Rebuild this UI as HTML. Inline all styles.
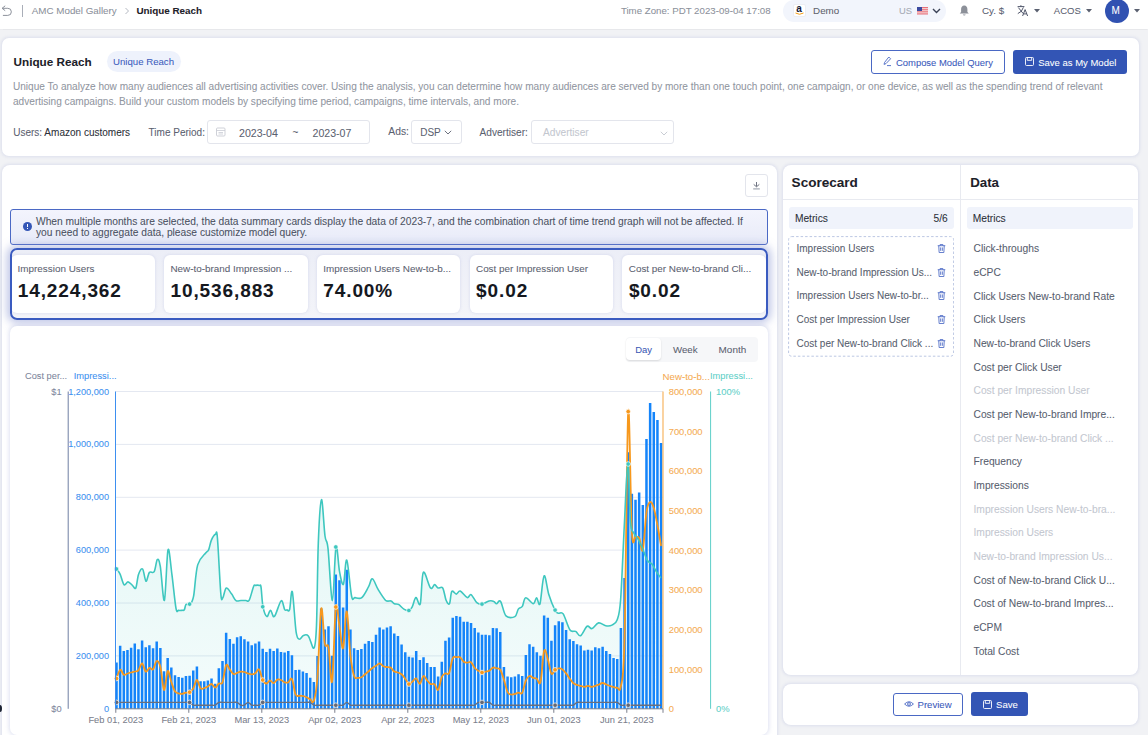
<!DOCTYPE html>
<html><head><meta charset="utf-8">
<style>
*{box-sizing:border-box;margin:0;padding:0}
html,body{width:1148px;height:735px;overflow:hidden}
body{background:#f1f2f5;font-family:"Liberation Sans",sans-serif;color:#1f2329;position:relative;-webkit-text-stroke:0.06px currentColor}
.abs{position:absolute}
.t{position:absolute;white-space:nowrap;line-height:1}
/* header */
#hdr{position:absolute;left:0;top:0;width:1148px;height:29px;background:#fff;box-shadow:0 0.5px 1px rgba(0,0,0,0.04)}
/* cards */
.card{position:absolute;background:#fff;border-radius:8px;box-shadow:0 0 3px 0.5px rgba(175,182,220,0.3)}
.btn{position:absolute;border-radius:3px;font-size:10.3px;line-height:1;white-space:nowrap}
.yl{position:absolute;right:1039px;width:60px;text-align:right;font-size:9.2px;color:#3b8ff0;line-height:14px}
.yl2{position:absolute;left:30px;width:31.7px;text-align:right;font-size:9.3px;color:#7d869c;line-height:14px}
.yr{position:absolute;left:668.7px;margin-top:0.7px;font-size:9.4px;color:#f5ab52;line-height:14px}
.yt{position:absolute;left:716px;margin-top:0.7px;font-size:9.4px;color:#5dcfc8;line-height:14px}
.xl{position:absolute;top:713.7px;width:80px;text-align:center;font-size:9.3px;color:#7b808c;line-height:12px}
.kpi{position:absolute;top:255px;height:58.3px;background:#fff;border-radius:6px;overflow:hidden;box-shadow:0 0 3px rgba(175,182,220,0.45)}
.kl{position:absolute;left:6.5px;top:8.1px;font-size:9.9px;color:#5b6170;white-space:nowrap;line-height:12px}
.kv{position:absolute;left:6.6px;top:24.3px;font-size:19px;letter-spacing:0.9px;font-weight:bold;color:#15181e;white-space:nowrap;line-height:24px}
.sc-row{position:absolute;left:796.5px;margin-top:1px;font-size:10px;color:#575e6e;white-space:nowrap;line-height:14px}
.dt-row{position:absolute;left:973.5px;margin-top:1.8px;font-size:10.25px;color:#575e6e;white-space:nowrap;line-height:14px}
.dt-row.dis{color:#c3c7d0}
.trash{position:absolute;left:937px;width:9px;height:9px}
</style></head>
<body>
<div id="hdr">
  <!-- back icon -->
  <svg class="abs" style="left:0;top:0" width="14" height="18" viewBox="0 0 14 18"><path d="M5.2,5.8 L2.1,8.3 L5.2,10.7 M2.1,8.3 H7.8 A3.55,3.55 0 0 1 7.8,15.4 H2.9" fill="none" stroke="#8c919b" stroke-width="1"/></svg>
  <div class="abs" style="left:22px;top:5px;width:1px;height:11.5px;background:#a9aeb8"></div>
  <div class="t" style="left:31.8px;top:6px;font-size:9.8px;color:#8c919b">AMC Model Gallery</div>
  <svg class="abs" style="left:124px;top:7px" width="6" height="8" viewBox="0 0 6 8"><path d="M1.5,1 L4.5,4 L1.5,7" fill="none" stroke="#b5b9c2" stroke-width="1"/></svg>
  <div class="t" style="left:136.4px;top:5.5px;font-size:9.85px;font-weight:bold;color:#1d2129">Unique Reach</div>

  <div class="t" style="left:620.9px;top:6px;font-size:9.7px;color:#8c919b">Time Zone: PDT 2023-09-04 17:08</div>
  <div class="abs" style="left:783px;top:0px;width:163px;height:22px;border-radius:11px;background:#f2f5fc"></div>
  <div class="abs" style="left:793px;top:4px;width:13px;height:13px;border-radius:2px;background:#fff;border:1px solid #eceef3"></div>
  <div class="t" style="left:796.3px;top:4px;font-size:10px;font-weight:bold;color:#141b38">a</div>
  <svg class="abs" style="left:795px;top:12px" width="9" height="4" viewBox="0 0 9 4"><path d="M0.5,1 Q4.5,3.5 8.5,1" fill="none" stroke="#f39c12" stroke-width="1"/></svg>
  <div class="t" style="left:813.1px;top:6px;font-size:9.8px;color:#5f636d">Demo</div>
  <div class="t" style="left:898.9px;top:6px;font-size:9.4px;color:#a5aab4">US</div>
  <svg class="abs" style="left:917px;top:7px" width="11" height="7.5" viewBox="0 0 11 7.5"><rect width="11" height="7.5" fill="#e8707a"/><rect y="1.1" width="11" height="1.1" fill="#f6d6d8"/><rect y="3.2" width="11" height="1.1" fill="#f6d6d8"/><rect y="5.3" width="11" height="1.1" fill="#f6d6d8"/><rect width="5" height="4" fill="#3b4aa0"/></svg>
  <svg class="abs" style="left:932px;top:8px" width="9" height="6" viewBox="0 0 9 6"><path d="M1,1 L4.5,4.5 L8,1" fill="none" stroke="#3a4256" stroke-width="1.4"/></svg>
  <!-- bell -->
  <svg class="abs" style="left:959px;top:5px" width="10.5" height="11" viewBox="0 0 10.5 11"><path d="M5.25,0.6 C7.4,0.6 8.4,2.4 8.4,4.3 L8.4,7 L9.8,8.6 L0.7,8.6 L2.1,7 L2.1,4.3 C2.1,2.4 3.1,0.6 5.25,0.6 Z" fill="#8c9099"/><path d="M3.8,9.4 A1.5,1.5 0 0 0 6.7,9.4 Z" fill="#8c9099"/></svg>
  <div class="t" style="left:982px;top:5.5px;font-size:9.8px;color:#5a6070">Cy. $</div>
  <!-- translate icon -->
  <svg class="abs" style="left:1017px;top:4px" width="12" height="12" viewBox="0 0 12 12"><path d="M0.6,2.6 H7.4 M3.9,1.2 V2.6 M1.4,3.6 L6.2,9.6 M6.4,3.4 Q5,8 0.8,9.6" fill="none" stroke="#50566a" stroke-width="1"/><path d="M5.6,12 L8.1,5.6 L10.6,12 M6.5,9.9 H9.7" fill="none" stroke="#50566a" stroke-width="1"/></svg>
  <svg class="abs" style="left:1034px;top:9px" width="6" height="4" viewBox="0 0 6 4"><path d="M0,0 H6 L3,3.5 Z" fill="#5a6070"/></svg>
  <div class="t" style="left:1053.8px;top:5.5px;font-size:9.5px;color:#5a6070">ACOS</div>
  <svg class="abs" style="left:1085.5px;top:9px" width="6" height="4" viewBox="0 0 6 4"><path d="M0,0 H6 L3,3.5 Z" fill="#5a6070"/></svg>
  <div class="abs" style="left:1104.5px;top:-1px;width:24px;height:24px;border-radius:50%;background:#3051b1"></div>
  <div class="t" style="left:1111.5px;top:6px;font-size:10px;color:#fff">M</div>
  <svg class="abs" style="left:1134px;top:9px" width="6" height="4" viewBox="0 0 6 4"><path d="M0,0 H6 L3,3.5 Z" fill="#5a6070"/></svg>
</div>

<!-- top card -->
<div class="card" style="left:1.5px;top:37.5px;width:1137.3px;height:118px;border-radius:7px"></div>
<div class="t" style="left:13.6px;top:55.5px;font-size:11.7px;font-weight:bold;color:#1d2129">Unique Reach</div>
<div class="abs" style="left:106.6px;top:51.3px;width:74px;height:21px;border-radius:10.5px;background:#eef2fc"></div>
<div class="t" style="left:113px;top:56.5px;font-size:9.65px;color:#3c5cbd">Unique Reach</div>
<div class="t" style="left:13px;top:82.3px;font-size:10.07px;color:#91969f">Unique To analyze how many audiences all advertising activities cover. Using the analysis, you can determine how many audiences are served by more than one touch point, one campaign, or one device, as well as the spending trend of relevant</div>
<div class="t" style="left:13px;top:96.5px;font-size:10.1px;color:#91969f">advertising campaigns. Build your custom models by specifying time period, campaigns, time intervals, and more.</div>

<div class="btn" style="left:871px;top:50px;width:134px;height:24px;border:1px solid #4a68c4;background:#fff"></div>
<svg class="abs" style="left:883px;top:56px" width="9" height="11" viewBox="0 0 9 11"><path d="M5.8,1 L7.6,2.8 L3,7.6 L1,8.4 L1.6,6.4 Z" fill="none" stroke="#4a68c4" stroke-width="0.9"/><path d="M4,9.6 H8" stroke="#4a68c4" stroke-width="0.9"/></svg>
<div class="t" style="left:896px;top:57.6px;font-size:9.43px;color:#3a59bb">Compose Model Query</div>
<div class="btn" style="left:1012.7px;top:50px;width:114.1px;height:24px;background:#3355b5"></div>
<svg class="abs" style="left:1024.5px;top:57px" width="9" height="9" viewBox="0 0 9 9"><rect x="0.5" y="0.5" width="8" height="8" rx="1" fill="none" stroke="#fff" stroke-width="0.9"/><path d="M2.3,0.8 V3.3 H6.7 V0.8" fill="none" stroke="#fff" stroke-width="0.9"/></svg>
<div class="t" style="left:1038.2px;top:57.6px;font-size:9.5px;color:#fff">Save as My Model</div>

<div class="t" style="left:13.2px;top:128px;font-size:10.03px;color:#5b6170">Users: <span style="color:#2b2f38">Amazon customers</span></div>
<div class="t" style="left:148.6px;top:127.6px;font-size:10px;color:#5b6170">Time Period:</div>
<div class="abs" style="left:207.3px;top:120px;width:163.2px;height:23.5px;border:1px solid #e3e5ec;border-radius:3px;background:#fff"></div>
<svg class="abs" style="left:216px;top:127px" width="9.5" height="9.5" viewBox="0 0 9.5 9.5"><rect x="0.5" y="1" width="8.5" height="8" rx="1" fill="none" stroke="#c9ccd4" stroke-width="0.9"/><path d="M0.5,3.5 H9 M2.5,5.5 H7 M2.5,7 H7" stroke="#c9ccd4" stroke-width="0.8"/></svg>
<div class="t" style="left:239px;top:128px;font-size:10.6px;color:#5b6170">2023-04</div>
<div class="t" style="left:292.5px;top:128px;font-size:10px;color:#5b6170">~</div>
<div class="t" style="left:312.5px;top:128px;font-size:10.6px;color:#5b6170">2023-07</div>
<div class="t" style="left:388.3px;top:127.4px;font-size:10.3px;color:#5b6170">Ads:</div>
<div class="abs" style="left:411px;top:120px;width:50.5px;height:23.5px;border:1px solid #e3e5ec;border-radius:3px;background:#fff"></div>
<div class="t" style="left:420.2px;top:127.6px;font-size:10px;color:#5b6170">DSP</div>
<svg class="abs" style="left:443.5px;top:130px" width="8" height="5" viewBox="0 0 8 5"><path d="M0.8,0.8 L4,4 L7.2,0.8" fill="none" stroke="#5b6170" stroke-width="0.9"/></svg>
<div class="t" style="left:479.6px;top:128px;font-size:10.11px;color:#5b6170">Advertiser:</div>
<div class="abs" style="left:531.3px;top:120px;width:142.4px;height:23.5px;border:1px solid #e3e5ec;border-radius:3px;background:#fff"></div>
<div class="t" style="left:543px;top:128px;font-size:10.17px;color:#c3c7cf">Advertiser</div>
<svg class="abs" style="left:659.5px;top:130.5px" width="8" height="5" viewBox="0 0 8 5"><path d="M0.8,0.8 L4,4 L7.2,0.8" fill="none" stroke="#c3c7cf" stroke-width="0.9"/></svg>

<!-- chart outer card -->
<div class="card" style="left:1.5px;top:164.5px;width:775.3px;height:600px"></div>
<div class="abs" style="left:745.4px;top:174.2px;width:22.3px;height:22.5px;border:1px solid #e3e5ec;border-radius:3px;background:#fff"></div>
<svg class="abs" style="left:751px;top:180px" width="11" height="11" viewBox="0 0 11 11"><path d="M5.5,2 V6.6 M2.7,4.4 L5.5,6.8 L8.3,4.4" fill="none" stroke="#6f7482" stroke-width="1"/><path d="M2.2,8.9 H8.8" fill="none" stroke="#a3a8b3" stroke-width="1.2"/></svg>

<!-- alert -->
<div class="abs" style="left:10.2px;top:209.2px;width:757.5px;height:35.4px;border:1px solid #4b69c5;border-radius:3px;background:linear-gradient(180deg,#f3f4fd 0%,#e8ebf8 100%)"></div>
<div class="abs" style="left:23px;top:222px;width:9.2px;height:9.2px;border-radius:50%;background:#3456b6"></div>
<div class="abs" style="left:27px;top:223.6px;width:1.2px;height:3.3px;background:#fff"></div>
<div class="abs" style="left:27px;top:228px;width:1.2px;height:1.2px;background:#fff"></div>
<div class="t" style="left:36px;top:217px;font-size:10.24px;color:#4b5262">When multiple months are selected, the data summary cards display the data of 2023-7, and the combination chart of time trend graph will not be affected. If</div>
<div class="t" style="left:36px;top:228.3px;font-size:10.24px;color:#4b5262">you need to aggregate data, please customize model query.</div>

<!-- KPI group -->
<div class="abs" style="left:10px;top:248.4px;width:757.8px;height:71.2px;border:2px solid #3a5bc0;border-radius:7px;background:linear-gradient(180deg,#eceef7,#f3f4f9);overflow:hidden;box-shadow:0 0 8px 3px rgba(125,140,205,0.5)">
  <div class="kpi" style="left:-0.9px;top:4.6px;width:143.8px"><div class="kl">Impression Users</div><div class="kv">14,224,362</div></div>
  <div class="kpi" style="left:151.9px;top:4.6px;width:143.8px"><div class="kl">New-to-brand Impression ...</div><div class="kv">10,536,883</div></div>
  <div class="kpi" style="left:304.7px;top:4.6px;width:143.8px"><div class="kl">Impression Users New-to-b...</div><div class="kv">74.00%</div></div>
  <div class="kpi" style="left:457.5px;top:4.6px;width:143.8px"><div class="kl">Cost per Impression User</div><div class="kv">$0.02</div></div>
  <div class="kpi" style="left:610.3px;top:4.6px;width:143.8px"><div class="kl">Cost per New-to-brand Cli...</div><div class="kv">$0.02</div></div>
</div>

<!-- chart inner card -->
<div class="abs" style="left:9.8px;top:326px;width:758px;height:409px;border-radius:7px;background:#fff;box-shadow:0 0 4px 1px rgba(160,170,215,0.35)"></div>
<!-- segmented -->
<div class="abs" style="left:625.6px;top:337px;width:132px;height:24.5px;border-radius:4px;background:#f6f7f9"></div>
<div class="abs" style="left:626px;top:337.5px;width:35px;height:22.8px;border-radius:4px;background:#fff;box-shadow:0 1px 2px rgba(0,0,0,0.12)"></div>
<div class="t" style="left:635.2px;top:344.5px;font-size:9.45px;color:#3b58b5">Day</div>
<div class="t" style="left:673px;top:344.5px;font-size:9.7px;color:#5b6170">Week</div>
<div class="t" style="left:718.6px;top:344.5px;font-size:9.95px;color:#5b6170">Month</div>
<div class="t" style="left:25px;top:371.5px;font-size:9.26px;color:#7d869c">Cost per...</div>
<div class="t" style="left:73.7px;top:371.5px;font-size:9.3px;color:#3b8ff0">Impressi...</div>
<div class="t" style="left:662.6px;top:371.5px;font-size:9.69px;color:#f5ab52">New-to-b...</div>
<div class="t" style="left:710px;top:371.5px;font-size:9.3px;color:#5dcfc8">Impressi...</div>
<svg class="abs" style="left:0;top:0" width="1148" height="735">
<line x1="115.5" y1="391.5" x2="663" y2="391.5" stroke="#e4e8f1" stroke-width="1"/>
<line x1="115.5" y1="444.4" x2="663" y2="444.4" stroke="#e4e8f1" stroke-width="1"/>
<line x1="115.5" y1="497.3" x2="663" y2="497.3" stroke="#e4e8f1" stroke-width="1"/>
<line x1="115.5" y1="550.1" x2="663" y2="550.1" stroke="#e4e8f1" stroke-width="1"/>
<line x1="115.5" y1="603.0" x2="663" y2="603.0" stroke="#e4e8f1" stroke-width="1"/>
<line x1="115.5" y1="655.9" x2="663" y2="655.9" stroke="#e4e8f1" stroke-width="1"/>
<defs><linearGradient id="tg" x1="0" y1="0" x2="0" y2="1"><stop offset="0" stop-color="#45c8c0" stop-opacity="0.16"/><stop offset="1" stop-color="#45c8c0" stop-opacity="0.06"/></linearGradient></defs>
<path d="M116.8,569.0 C117.4,569.9 119.0,571.8 120.2,574.4 C121.4,577.0 122.7,583.4 124.0,584.6 C125.3,585.9 126.6,581.8 128.0,581.9 C129.4,582.0 131.1,584.3 132.4,585.3 C133.7,586.3 134.8,589.8 135.8,588.0 C136.8,586.2 137.4,577.6 138.5,574.4 C139.6,571.2 141.3,567.9 142.6,569.0 C143.8,570.1 144.9,580.6 146.0,581.2 C147.1,581.8 148.0,574.0 149.4,572.4 C150.8,570.8 152.9,573.9 154.2,571.7 C155.5,569.6 156.3,560.4 157.3,559.5 C158.3,558.6 159.1,559.5 160.3,566.3 C161.5,573.1 163.1,603.0 164.4,600.3 C165.7,597.6 166.8,554.2 168.0,549.9 C169.2,545.6 170.6,564.6 171.9,574.4 C173.2,584.1 174.9,602.4 176.0,608.4 C177.1,614.4 177.5,610.0 178.5,610.3 C179.5,610.6 181.0,610.4 182.0,610.3 C183.0,610.2 183.6,610.8 184.3,609.8 C185.0,608.8 185.1,605.3 186.1,604.4 C187.1,603.5 188.9,605.5 190.2,604.1 C191.4,602.7 192.3,602.7 193.6,596.2 C194.8,589.7 195.6,572.1 197.7,564.9 C199.8,557.6 204.1,555.2 205.9,552.7 C207.7,550.2 207.7,552.0 208.6,549.9 C209.5,547.8 210.2,543.0 211.3,540.4 C212.4,537.8 214.4,534.8 215.4,534.3 C216.4,533.8 216.5,527.8 217.4,537.7 C218.3,547.6 219.9,583.5 220.8,593.5 C221.7,603.5 222.0,598.5 222.9,597.6 C223.8,596.7 224.8,588.6 226.3,588.0 C227.8,587.4 230.1,592.0 231.7,594.1 C233.3,596.2 234.4,599.5 236.0,600.6 C237.6,601.7 239.3,600.5 241.0,600.5 C242.7,600.5 244.6,600.5 246.0,600.5 C247.4,600.5 247.9,602.5 249.2,600.2 C250.5,597.9 252.5,589.0 253.6,586.5 C254.7,584.0 254.5,585.6 255.5,585.4 C256.5,585.2 258.6,585.1 259.5,585.4 C260.4,585.7 260.4,583.4 261.0,587.0 C261.6,590.6 262.0,601.9 263.0,606.8 C264.0,611.7 265.6,615.9 266.9,616.5 C268.1,617.1 269.2,610.4 270.5,610.4 C271.8,610.4 272.6,618.1 274.4,616.5 C276.2,614.9 279.4,601.9 281.1,600.8 C282.8,599.6 283.7,608.1 284.7,609.6 C285.7,611.1 286.2,609.8 287.0,609.8 C287.8,609.8 288.7,612.6 289.6,609.6 C290.5,606.6 291.2,588.1 292.3,591.8 C293.4,595.5 294.9,623.9 296.1,631.8 C297.3,639.7 298.2,638.5 299.4,639.1 C300.6,639.7 301.9,635.9 303.4,635.4 C304.9,634.9 306.5,633.8 308.3,635.9 C310.1,638.0 312.6,649.9 314.0,648.1 C315.4,646.3 315.8,642.8 316.5,625.3 C317.2,607.8 317.5,564.0 318.3,543.1 C319.1,522.2 320.4,500.9 321.5,499.7 C322.6,498.5 323.9,527.9 325.0,536.0 C326.1,544.1 326.8,537.6 328.0,548.4 C329.2,559.2 331.1,600.8 332.4,600.6 C333.7,600.4 334.8,551.9 336.0,547.0 C337.2,542.1 338.3,565.2 339.5,571.4 C340.7,577.6 342.2,586.2 343.4,584.3 C344.6,582.4 345.4,558.1 346.8,560.1 C348.2,562.1 350.2,590.0 351.6,596.2 C353.0,602.5 353.3,597.4 355.0,597.6 C356.7,597.8 359.5,599.4 361.8,597.6 C364.1,595.8 366.8,589.8 368.6,586.7 C370.4,583.6 370.8,578.3 372.4,578.8 C374.0,579.2 375.9,585.8 378.1,589.4 C380.3,593.0 383.5,598.4 385.6,600.3 C387.8,602.2 389.5,600.4 391.0,601.0 C392.5,601.6 393.1,603.1 394.4,603.7 C395.6,604.3 396.9,603.5 398.5,604.4 C400.1,605.3 402.2,608.1 403.9,609.1 C405.6,610.1 407.3,610.8 408.7,610.5 C410.1,610.2 410.9,609.2 412.1,607.1 C413.3,605.0 414.5,598.2 415.9,597.6 C417.3,597.0 419.1,607.9 420.3,603.7 C421.5,599.5 421.6,575.0 423.3,572.4 C425.0,569.8 428.6,586.0 430.5,588.0 C432.4,590.0 433.4,584.6 434.6,584.6 C435.9,584.6 436.6,587.4 438.0,588.0 C439.4,588.6 441.3,586.0 442.7,588.0 C444.1,590.0 445.0,597.7 446.1,600.3 C447.2,602.9 448.6,605.2 449.5,603.7 C450.4,602.2 450.7,593.0 451.8,591.4 C452.9,589.8 454.9,594.2 456.3,594.1 C457.7,594.0 458.4,590.4 460.2,591.0 C462.0,591.6 465.4,597.0 467.2,597.6 C469.0,598.2 469.5,593.8 471.1,594.6 C472.7,595.5 475.0,601.1 476.8,602.7 C478.6,604.3 479.9,604.4 481.9,604.1 C483.9,603.8 487.0,601.5 489.0,601.0 C491.0,600.5 492.6,600.9 493.8,601.4 C495.1,601.9 495.4,603.7 496.5,603.7 C497.6,603.7 499.0,599.4 500.6,601.4 C502.2,603.4 503.6,613.4 506.0,615.9 C508.4,618.4 512.9,617.7 514.9,616.6 C516.9,615.5 517.1,610.8 518.3,609.1 C519.5,607.4 521.1,608.3 522.3,606.4 C523.5,604.5 523.9,598.2 525.7,597.8 C527.5,597.3 531.4,603.7 533.2,603.7 C535.0,603.7 535.5,597.8 536.6,597.8 C537.7,597.8 538.8,607.4 540.0,603.7 C541.2,600.0 542.6,577.3 544.1,575.8 C545.6,574.3 547.1,589.1 548.9,594.8 C550.7,600.5 553.4,607.0 555.0,610.1 C556.6,613.2 557.0,612.6 558.4,613.2 C559.8,613.8 561.3,611.1 563.2,613.9 C565.1,616.7 567.9,627.1 570.0,630.0 C572.1,632.9 573.9,630.4 575.7,631.4 C577.5,632.4 578.7,636.6 580.6,635.7 C582.5,634.9 585.2,627.5 587.1,626.3 C589.0,625.1 590.1,629.2 592.0,628.6 C593.9,628.0 596.3,623.4 598.6,622.9 C600.9,622.4 603.5,625.3 605.7,625.7 C607.9,626.1 610.1,626.1 612.0,625.1 C613.9,624.1 615.7,624.2 617.1,620.0 C618.5,615.8 619.4,615.7 620.6,600.0 C621.8,584.3 623.1,548.4 624.3,525.7 C625.5,503.0 626.8,464.6 627.8,464.0 C628.8,463.4 629.5,510.9 630.5,522.4 C631.5,533.9 632.6,530.3 633.8,533.0 C635.0,535.7 636.4,536.2 637.9,538.8 C639.4,541.3 640.9,544.7 642.5,548.3 C644.1,551.9 645.8,557.9 647.4,560.5 C649.0,563.1 650.6,562.2 652.0,564.0 C653.4,565.8 654.5,568.7 656.0,571.0 C657.5,573.3 660.0,576.8 660.8,578.0 L660.8,708.8 L116.8,708.8 Z" fill="url(#tg)"/>
<path d="M115.25,662.5h2.5V708.8h-2.5ZM118.91,645.7h2.5V708.8h-2.5ZM122.56,651.0h2.5V708.8h-2.5ZM126.22,650.0h2.5V708.8h-2.5ZM129.87,647.7h2.5V708.8h-2.5ZM133.53,643.4h2.5V708.8h-2.5ZM137.18,649.2h2.5V708.8h-2.5ZM140.84,640.4h2.5V708.8h-2.5ZM144.49,647.3h2.5V708.8h-2.5ZM148.14,645.3h2.5V708.8h-2.5ZM151.80,648.3h2.5V708.8h-2.5ZM155.45,641.5h2.5V708.8h-2.5ZM159.11,648.0h2.5V708.8h-2.5ZM162.76,671.2h2.5V708.8h-2.5ZM166.42,657.9h2.5V708.8h-2.5ZM170.07,667.5h2.5V708.8h-2.5ZM173.73,675.2h2.5V708.8h-2.5ZM177.38,677.0h2.5V708.8h-2.5ZM181.04,677.7h2.5V708.8h-2.5ZM184.69,675.9h2.5V708.8h-2.5ZM188.35,675.8h2.5V708.8h-2.5ZM192.00,670.4h2.5V708.8h-2.5ZM195.66,666.6h2.5V708.8h-2.5ZM199.31,681.2h2.5V708.8h-2.5ZM202.97,681.2h2.5V708.8h-2.5ZM206.62,680.6h2.5V708.8h-2.5ZM210.28,678.5h2.5V708.8h-2.5ZM213.94,683.8h2.5V708.8h-2.5ZM217.59,668.3h2.5V708.8h-2.5ZM221.25,661.0h2.5V708.8h-2.5ZM224.90,632.8h2.5V708.8h-2.5ZM228.56,638.9h2.5V708.8h-2.5ZM232.21,643.8h2.5V708.8h-2.5ZM235.87,637.3h2.5V708.8h-2.5ZM239.52,636.3h2.5V708.8h-2.5ZM243.18,639.2h2.5V708.8h-2.5ZM246.83,641.5h2.5V708.8h-2.5ZM250.48,645.3h2.5V708.8h-2.5ZM254.14,643.4h2.5V708.8h-2.5ZM257.79,641.5h2.5V708.8h-2.5ZM261.45,648.8h2.5V708.8h-2.5ZM265.11,652.1h2.5V708.8h-2.5ZM268.76,648.8h2.5V708.8h-2.5ZM272.41,651.1h2.5V708.8h-2.5ZM276.07,648.5h2.5V708.8h-2.5ZM279.73,652.1h2.5V708.8h-2.5ZM283.38,652.6h2.5V708.8h-2.5ZM287.03,651.1h2.5V708.8h-2.5ZM290.69,655.2h2.5V708.8h-2.5ZM294.35,670.1h2.5V708.8h-2.5ZM298.00,669.8h2.5V708.8h-2.5ZM301.65,671.4h2.5V708.8h-2.5ZM305.31,673.1h2.5V708.8h-2.5ZM308.97,677.8h2.5V708.8h-2.5ZM312.62,682.0h2.5V708.8h-2.5ZM316.27,656.0h2.5V708.8h-2.5ZM319.93,608.5h2.5V708.8h-2.5ZM323.58,629.4h2.5V708.8h-2.5ZM327.24,626.2h2.5V708.8h-2.5ZM330.89,655.8h2.5V708.8h-2.5ZM334.55,574.4h2.5V708.8h-2.5ZM338.20,580.2h2.5V708.8h-2.5ZM341.86,607.4h2.5V708.8h-2.5ZM345.51,569.8h2.5V708.8h-2.5ZM349.17,629.6h2.5V708.8h-2.5ZM352.82,648.2h2.5V708.8h-2.5ZM356.48,650.0h2.5V708.8h-2.5ZM360.13,649.1h2.5V708.8h-2.5ZM363.79,643.7h2.5V708.8h-2.5ZM367.44,641.0h2.5V708.8h-2.5ZM371.10,642.0h2.5V708.8h-2.5ZM374.75,634.8h2.5V708.8h-2.5ZM378.41,627.6h2.5V708.8h-2.5ZM382.06,629.4h2.5V708.8h-2.5ZM385.72,627.6h2.5V708.8h-2.5ZM389.38,626.3h2.5V708.8h-2.5ZM393.03,633.5h2.5V708.8h-2.5ZM396.69,636.0h2.5V708.8h-2.5ZM400.34,644.5h2.5V708.8h-2.5ZM404.00,652.2h2.5V708.8h-2.5ZM407.65,656.8h2.5V708.8h-2.5ZM411.31,657.6h2.5V708.8h-2.5ZM414.96,650.9h2.5V708.8h-2.5ZM418.62,659.9h2.5V708.8h-2.5ZM422.27,657.2h2.5V708.8h-2.5ZM425.93,662.9h2.5V708.8h-2.5ZM429.58,667.1h2.5V708.8h-2.5ZM433.23,667.1h2.5V708.8h-2.5ZM436.89,676.4h2.5V708.8h-2.5ZM440.54,661.7h2.5V708.8h-2.5ZM444.20,640.7h2.5V708.8h-2.5ZM447.85,637.5h2.5V708.8h-2.5ZM451.51,617.7h2.5V708.8h-2.5ZM455.16,615.9h2.5V708.8h-2.5ZM458.82,616.8h2.5V708.8h-2.5ZM462.47,621.7h2.5V708.8h-2.5ZM466.13,621.7h2.5V708.8h-2.5ZM469.78,623.1h2.5V708.8h-2.5ZM473.44,628.1h2.5V708.8h-2.5ZM477.09,632.6h2.5V708.8h-2.5ZM480.75,634.8h2.5V708.8h-2.5ZM484.40,634.8h2.5V708.8h-2.5ZM488.06,635.3h2.5V708.8h-2.5ZM491.71,628.1h2.5V708.8h-2.5ZM495.37,628.3h2.5V708.8h-2.5ZM499.02,632.0h2.5V708.8h-2.5ZM502.68,667.1h2.5V708.8h-2.5ZM506.33,676.6h2.5V708.8h-2.5ZM509.99,677.3h2.5V708.8h-2.5ZM513.64,676.6h2.5V708.8h-2.5ZM517.30,674.3h2.5V708.8h-2.5ZM520.95,676.0h2.5V708.8h-2.5ZM524.61,655.0h2.5V708.8h-2.5ZM528.26,644.3h2.5V708.8h-2.5ZM531.92,646.8h2.5V708.8h-2.5ZM535.58,652.2h2.5V708.8h-2.5ZM539.23,655.8h2.5V708.8h-2.5ZM542.88,615.5h2.5V708.8h-2.5ZM546.54,617.7h2.5V708.8h-2.5ZM550.19,640.7h2.5V708.8h-2.5ZM553.85,625.2h2.5V708.8h-2.5ZM557.50,621.3h2.5V708.8h-2.5ZM561.16,622.2h2.5V708.8h-2.5ZM564.82,629.9h2.5V708.8h-2.5ZM568.47,639.2h2.5V708.8h-2.5ZM572.12,641.0h2.5V708.8h-2.5ZM575.78,644.3h2.5V708.8h-2.5ZM579.43,645.5h2.5V708.8h-2.5ZM583.09,650.4h2.5V708.8h-2.5ZM586.74,649.7h2.5V708.8h-2.5ZM590.40,650.6h2.5V708.8h-2.5ZM594.05,647.3h2.5V708.8h-2.5ZM597.71,648.2h2.5V708.8h-2.5ZM601.37,646.8h2.5V708.8h-2.5ZM605.02,650.9h2.5V708.8h-2.5ZM608.67,654.0h2.5V708.8h-2.5ZM612.33,658.1h2.5V708.8h-2.5ZM615.98,659.0h2.5V708.8h-2.5ZM619.64,628.1h2.5V708.8h-2.5ZM623.29,578.0h2.5V708.8h-2.5ZM626.95,452.3h2.5V708.8h-2.5ZM630.61,493.8h2.5V708.8h-2.5ZM634.26,499.7h2.5V708.8h-2.5ZM637.91,492.4h2.5V708.8h-2.5ZM641.57,504.9h2.5V708.8h-2.5ZM645.23,439.1h2.5V708.8h-2.5ZM648.88,403.1h2.5V708.8h-2.5ZM652.53,411.9h2.5V708.8h-2.5ZM656.19,420.1h2.5V708.8h-2.5ZM659.85,442.9h2.5V708.8h-2.5Z" fill="#1484fa"/>
<path d="M116.5,702.4 C117.1,702.4 118.9,702.4 120.2,702.4 C121.4,702.4 122.6,702.4 123.8,702.4 C125.0,702.4 126.2,702.4 127.5,702.4 C128.7,702.4 129.9,702.4 131.1,702.4 C132.3,702.4 133.6,702.4 134.8,702.4 C136.0,702.4 137.2,702.4 138.4,702.4 C139.6,702.4 140.9,702.4 142.1,702.4 C143.3,702.4 144.5,702.4 145.7,702.4 C147.0,702.4 148.2,702.4 149.4,702.4 C150.6,702.4 151.8,702.4 153.1,702.4 C154.3,702.4 155.5,702.4 156.7,702.4 C157.9,702.4 159.1,702.4 160.4,702.4 C161.6,702.4 162.8,702.4 164.0,702.4 C165.2,702.4 166.5,702.4 167.7,702.4 C168.9,702.4 170.1,702.4 171.3,702.4 C172.5,702.4 173.8,702.4 175.0,702.4 C176.2,702.4 177.4,702.4 178.6,702.4 C179.9,702.4 181.1,702.4 182.3,702.4 C183.5,702.4 184.7,702.4 185.9,702.4 C187.2,702.4 188.4,701.9 189.6,702.4 C190.8,702.9 192.0,704.7 193.3,705.2 C194.5,705.7 195.7,705.2 196.9,705.2 C198.1,705.2 199.3,705.2 200.6,705.2 C201.8,705.2 203.0,705.2 204.2,705.2 C205.4,705.2 206.7,705.2 207.9,705.2 C209.1,705.2 210.3,705.2 211.5,705.2 C212.7,705.2 214.0,705.7 215.2,705.2 C216.4,704.7 217.6,702.9 218.8,702.4 C220.1,701.9 221.3,702.4 222.5,702.4 C223.7,702.4 224.9,702.4 226.1,702.4 C227.4,702.4 228.6,702.4 229.8,702.4 C231.0,702.4 232.2,702.4 233.5,702.4 C234.7,702.4 235.9,701.9 237.1,702.4 C238.3,702.9 239.6,704.7 240.8,705.2 C242.0,705.7 243.2,705.7 244.4,705.2 C245.6,704.7 246.9,702.4 248.1,702.4 C249.3,702.4 250.5,704.7 251.7,705.2 C253.0,705.7 254.2,705.2 255.4,705.2 C256.6,705.2 257.8,705.7 259.0,705.2 C260.3,704.7 261.5,702.9 262.7,702.4 C263.9,701.9 265.1,702.4 266.4,702.4 C267.6,702.4 268.8,702.4 270.0,702.4 C271.2,702.4 272.4,702.4 273.7,702.4 C274.9,702.4 276.1,702.4 277.3,702.4 C278.5,702.4 279.8,702.4 281.0,702.4 C282.2,702.4 283.4,702.4 284.6,702.4 C285.8,702.4 287.1,702.4 288.3,702.4 C289.5,702.4 290.7,702.4 291.9,702.4 C293.2,702.4 294.4,702.4 295.6,702.4 C296.8,702.4 298.0,702.4 299.2,702.4 C300.5,702.4 301.7,702.4 302.9,702.4 C304.1,702.4 305.3,702.4 306.6,702.4 C307.8,702.4 309.0,701.9 310.2,702.4 C311.4,702.9 312.7,704.7 313.9,705.2 C315.1,705.7 316.3,705.2 317.5,705.2 C318.7,705.2 320.0,705.2 321.2,705.2 C322.4,705.2 323.6,705.2 324.8,705.2 C326.1,705.2 327.3,705.2 328.5,705.2 C329.7,705.2 330.9,705.2 332.1,705.2 C333.4,705.2 334.6,705.2 335.8,705.2 C337.0,705.2 338.2,705.2 339.5,705.2 C340.7,705.2 341.9,705.7 343.1,705.2 C344.3,704.7 345.5,702.4 346.8,702.4 C348.0,702.4 349.2,704.7 350.4,705.2 C351.6,705.7 352.9,705.2 354.1,705.2 C355.3,705.2 356.5,705.2 357.7,705.2 C358.9,705.2 360.2,705.2 361.4,705.2 C362.6,705.2 363.8,705.2 365.0,705.2 C366.3,705.2 367.5,705.2 368.7,705.2 C369.9,705.2 371.1,705.2 372.4,705.2 C373.6,705.2 374.8,705.2 376.0,705.2 C377.2,705.2 378.4,705.2 379.7,705.2 C380.9,705.2 382.1,705.2 383.3,705.2 C384.5,705.2 385.8,705.2 387.0,705.2 C388.2,705.2 389.4,705.2 390.6,705.2 C391.8,705.2 393.1,705.2 394.3,705.2 C395.5,705.2 396.7,705.2 397.9,705.2 C399.2,705.2 400.4,705.2 401.6,705.2 C402.8,705.2 404.0,705.2 405.2,705.2 C406.5,705.2 407.7,705.2 408.9,705.2 C410.1,705.2 411.3,705.2 412.6,705.2 C413.8,705.2 415.0,705.2 416.2,705.2 C417.4,705.2 418.6,705.2 419.9,705.2 C421.1,705.2 422.3,705.2 423.5,705.2 C424.7,705.2 426.0,705.2 427.2,705.2 C428.4,705.2 429.6,705.2 430.8,705.2 C432.0,705.2 433.3,705.2 434.5,705.2 C435.7,705.2 436.9,705.2 438.1,705.2 C439.4,705.2 440.6,705.2 441.8,705.2 C443.0,705.2 444.2,705.2 445.4,705.2 C446.7,705.2 447.9,705.2 449.1,705.2 C450.3,705.2 451.5,705.2 452.8,705.2 C454.0,705.2 455.2,705.2 456.4,705.2 C457.6,705.2 458.9,705.2 460.1,705.2 C461.3,705.2 462.5,705.2 463.7,705.2 C464.9,705.2 466.2,705.2 467.4,705.2 C468.6,705.2 469.8,705.2 471.0,705.2 C472.3,705.2 473.5,705.7 474.7,705.2 C475.9,704.7 477.1,702.9 478.3,702.4 C479.6,701.9 480.8,702.4 482.0,702.4 C483.2,702.4 484.4,702.4 485.7,702.4 C486.9,702.4 488.1,701.9 489.3,702.4 C490.5,702.9 491.7,704.7 493.0,705.2 C494.2,705.7 495.4,705.2 496.6,705.2 C497.8,705.2 499.1,705.2 500.3,705.2 C501.5,705.2 502.7,705.2 503.9,705.2 C505.1,705.2 506.4,705.2 507.6,705.2 C508.8,705.2 510.0,705.2 511.2,705.2 C512.5,705.2 513.7,705.2 514.9,705.2 C516.1,705.2 517.3,705.2 518.5,705.2 C519.8,705.2 521.0,705.2 522.2,705.2 C523.4,705.2 524.6,705.2 525.9,705.2 C527.1,705.2 528.3,705.2 529.5,705.2 C530.7,705.2 532.0,705.2 533.2,705.2 C534.4,705.2 535.6,705.2 536.8,705.2 C538.0,705.2 539.3,705.2 540.5,705.2 C541.7,705.2 542.9,705.2 544.1,705.2 C545.4,705.2 546.6,705.2 547.8,705.2 C549.0,705.2 550.2,705.2 551.4,705.2 C552.7,705.2 553.9,705.2 555.1,705.2 C556.3,705.2 557.5,705.2 558.8,705.2 C560.0,705.2 561.2,705.2 562.4,705.2 C563.6,705.2 564.8,705.2 566.1,705.2 C567.3,705.2 568.5,705.2 569.7,705.2 C570.9,705.2 572.2,705.7 573.4,705.2 C574.6,704.7 575.8,702.9 577.0,702.4 C578.2,701.9 579.5,702.4 580.7,702.4 C581.9,702.4 583.1,702.4 584.3,702.4 C585.6,702.4 586.8,702.4 588.0,702.4 C589.2,702.4 590.4,702.4 591.6,702.4 C592.9,702.4 594.1,702.4 595.3,702.4 C596.5,702.4 597.7,702.4 599.0,702.4 C600.2,702.4 601.4,702.4 602.6,702.4 C603.8,702.4 605.1,702.4 606.3,702.4 C607.5,702.4 608.7,702.4 609.9,702.4 C611.1,702.4 612.4,702.4 613.6,702.4 C614.8,702.4 616.0,701.9 617.2,702.4 C618.5,702.9 619.7,704.7 620.9,705.2 C622.1,705.7 623.3,705.2 624.5,705.2 C625.8,705.2 627.0,705.2 628.2,705.2 C629.4,705.2 630.6,705.2 631.9,705.2 C633.1,705.2 634.3,705.2 635.5,705.2 C636.7,705.2 637.9,705.2 639.2,705.2 C640.4,705.2 641.6,705.2 642.8,705.2 C644.0,705.2 645.3,705.2 646.5,705.2 C647.7,705.2 648.9,705.2 650.1,705.2 C651.3,705.2 652.6,705.2 653.8,705.2 C655.0,705.2 656.2,705.2 657.4,705.2 C658.7,705.2 660.5,705.2 661.1,705.2" fill="none" stroke="#6b6f7c" stroke-width="1.4"/>
<path d="M116.5,678.5 C117.1,677.0 118.9,670.4 120.2,669.8 C121.4,669.2 122.6,674.1 123.8,674.7 C125.0,675.3 126.2,673.9 127.5,673.5 C128.7,673.1 129.9,672.8 131.1,672.5 C132.3,672.2 133.6,671.9 134.8,671.5 C136.0,671.1 137.2,671.8 138.4,670.4 C139.6,669.0 140.9,663.1 142.1,663.3 C143.3,663.5 144.5,670.9 145.7,671.6 C147.0,672.4 148.2,668.2 149.4,667.8 C150.6,667.4 151.8,670.5 153.1,669.4 C154.3,668.3 155.5,661.4 156.7,661.0 C157.9,660.6 159.1,662.2 160.4,667.0 C161.6,671.8 162.8,689.3 164.0,690.0 C165.2,690.7 166.5,672.3 167.7,671.0 C168.9,669.7 170.1,678.6 171.3,682.0 C172.5,685.4 173.8,689.6 175.0,691.5 C176.2,693.4 177.4,692.9 178.6,693.3 C179.9,693.7 181.1,693.9 182.3,693.8 C183.5,693.6 184.7,693.0 185.9,692.7 C187.2,692.4 188.4,692.9 189.6,692.2 C190.8,691.5 192.0,690.4 193.3,688.4 C194.5,686.4 195.7,680.0 196.9,680.0 C198.1,680.0 199.3,687.1 200.6,688.4 C201.8,689.7 203.0,688.3 204.2,688.0 C205.4,687.7 206.7,687.2 207.9,686.5 C209.1,685.8 210.3,683.8 211.5,684.0 C212.7,684.2 214.0,687.8 215.2,687.7 C216.4,687.6 217.6,684.4 218.8,683.5 C220.1,682.6 221.3,685.3 222.5,682.3 C223.7,679.2 224.9,667.4 226.1,665.2 C227.4,663.1 228.6,668.0 229.8,669.4 C231.0,670.8 232.2,673.3 233.5,673.9 C234.7,674.5 235.9,673.3 237.1,672.9 C238.3,672.5 239.6,671.8 240.8,671.6 C242.0,671.5 243.2,671.7 244.4,672.0 C245.6,672.3 246.9,673.1 248.1,673.5 C249.3,673.9 250.5,674.4 251.7,674.4 C253.0,674.4 254.2,674.0 255.4,673.2 C256.6,672.4 257.8,668.3 259.0,669.4 C260.3,670.5 261.5,677.6 262.7,680.0 C263.9,682.4 265.1,683.4 266.4,683.5 C267.6,683.6 268.8,680.6 270.0,680.5 C271.2,680.4 272.4,683.2 273.7,683.1 C274.9,683.0 276.1,680.1 277.3,679.6 C278.5,679.1 279.8,679.5 281.0,680.0 C282.2,680.5 283.4,681.9 284.6,682.3 C285.8,682.7 287.1,682.8 288.3,682.3 C289.5,681.8 290.7,677.0 291.9,679.0 C293.2,681.0 294.4,691.7 295.6,694.5 C296.8,697.3 298.0,695.5 299.2,695.7 C300.5,696.0 301.7,695.7 302.9,696.0 C304.1,696.3 305.3,696.7 306.6,697.3 C307.8,697.9 309.0,698.8 310.2,699.4 C311.4,700.0 312.7,704.3 313.9,700.6 C315.1,696.9 316.3,692.3 317.5,677.0 C318.7,661.7 320.0,614.2 321.2,608.7 C322.4,603.2 323.6,637.3 324.8,643.7 C326.1,650.1 327.3,641.0 328.5,647.3 C329.7,653.6 330.9,688.1 332.1,681.4 C333.4,674.7 334.6,616.1 335.8,607.0 C337.0,597.9 338.2,619.8 339.5,626.7 C340.7,633.6 341.9,650.8 343.1,648.2 C344.3,645.7 345.5,610.2 346.8,611.4 C348.0,612.6 349.2,644.6 350.4,655.4 C351.6,666.2 352.9,672.3 354.1,676.0 C355.3,679.7 356.5,677.6 357.7,677.8 C358.9,678.0 360.2,677.9 361.4,677.3 C362.6,676.7 363.8,675.3 365.0,674.3 C366.3,673.3 367.5,672.2 368.7,671.2 C369.9,670.2 371.1,668.9 372.4,668.0 C373.6,667.1 374.8,666.5 376.0,665.8 C377.2,665.0 378.4,663.4 379.7,663.5 C380.9,663.6 382.1,665.6 383.3,666.2 C384.5,666.8 385.8,666.9 387.0,667.1 C388.2,667.3 389.4,666.9 390.6,667.6 C391.8,668.4 393.1,670.8 394.3,671.6 C395.5,672.4 396.7,672.0 397.9,672.5 C399.2,673.0 400.4,673.3 401.6,674.3 C402.8,675.3 404.0,677.1 405.2,678.7 C406.5,680.3 407.7,683.7 408.9,684.1 C410.1,684.5 411.3,682.4 412.6,681.4 C413.8,680.4 415.0,678.0 416.2,678.4 C417.4,678.8 418.6,684.2 419.9,683.8 C421.1,683.4 422.3,676.5 423.5,676.0 C424.7,675.5 426.0,679.1 427.2,680.5 C428.4,681.9 429.6,683.5 430.8,684.1 C432.0,684.7 433.3,683.1 434.5,684.1 C435.7,685.1 436.9,691.1 438.1,689.9 C439.4,688.7 440.6,679.8 441.8,677.0 C443.0,674.2 444.2,674.1 445.4,673.4 C446.7,672.7 447.9,675.5 449.1,673.0 C450.3,670.5 451.5,660.7 452.8,658.1 C454.0,655.5 455.2,657.4 456.4,657.2 C457.6,657.1 458.9,656.5 460.1,657.2 C461.3,658.0 462.5,660.8 463.7,661.7 C464.9,662.6 466.2,662.5 467.4,662.6 C468.6,662.7 469.8,661.3 471.0,662.2 C472.3,663.1 473.5,666.6 474.7,668.0 C475.9,669.4 477.1,670.0 478.3,670.7 C479.6,671.5 480.8,672.4 482.0,672.5 C483.2,672.6 484.4,671.9 485.7,671.6 C486.9,671.3 488.1,671.4 489.3,670.7 C490.5,670.0 491.7,668.0 493.0,667.6 C494.2,667.2 495.4,667.9 496.6,668.3 C497.8,668.7 499.1,667.9 500.3,669.8 C501.5,671.7 502.7,675.9 503.9,679.6 C505.1,683.3 506.4,689.7 507.6,692.2 C508.8,694.7 510.0,694.2 511.2,694.5 C512.5,694.8 513.7,694.3 514.9,694.0 C516.1,693.7 517.3,692.9 518.5,692.7 C519.8,692.5 521.0,694.7 522.2,692.7 C523.4,690.7 524.6,683.3 525.9,680.5 C527.1,677.7 528.3,676.5 529.5,676.0 C530.7,675.5 532.0,677.3 533.2,677.8 C534.4,678.2 535.6,678.0 536.8,678.7 C538.0,679.4 539.3,686.6 540.5,682.0 C541.7,677.4 542.9,654.7 544.1,650.9 C545.4,647.1 546.6,655.2 547.8,659.0 C549.0,662.8 550.2,671.9 551.4,673.7 C552.7,675.5 553.9,670.7 555.1,669.8 C556.3,668.9 557.5,668.4 558.8,668.3 C560.0,668.2 561.2,668.5 562.4,669.4 C563.6,670.2 564.8,671.8 566.1,673.4 C567.3,675.0 568.5,677.1 569.7,678.7 C570.9,680.3 572.2,682.2 573.4,683.2 C574.6,684.2 575.8,684.5 577.0,685.0 C578.2,685.5 579.5,685.6 580.7,685.9 C581.9,686.2 583.1,686.8 584.3,686.8 C585.6,686.8 586.8,685.9 588.0,685.9 C589.2,685.9 590.4,686.8 591.6,686.8 C592.9,686.8 594.1,686.3 595.3,685.9 C596.5,685.5 597.7,685.0 599.0,684.5 C600.2,684.0 601.4,683.0 602.6,683.0 C603.8,683.0 605.1,684.0 606.3,684.5 C607.5,685.0 608.7,685.6 609.9,686.0 C611.1,686.4 612.4,686.7 613.6,687.0 C614.8,687.3 616.0,687.9 617.2,687.7 C618.5,687.5 619.7,694.0 620.9,686.0 C622.1,678.0 623.3,685.7 624.5,640.0 C625.8,594.3 627.0,429.6 628.2,411.6 C629.4,393.6 630.6,511.1 631.9,532.0 C633.1,552.9 634.3,536.0 635.5,537.0 C636.7,538.0 637.9,535.8 639.2,538.0 C640.4,540.2 641.6,554.3 642.8,550.0 C644.0,545.7 645.3,520.0 646.5,512.0 C647.7,504.0 648.9,502.7 650.1,502.0 C651.3,501.3 652.6,504.2 653.8,508.0 C655.0,511.8 656.2,518.7 657.4,525.0 C658.7,531.3 660.5,542.5 661.1,546.0" fill="none" stroke="#f7981c" stroke-width="1.8"/>
<path d="M116.8,569.0 C117.4,569.9 119.0,571.8 120.2,574.4 C121.4,577.0 122.7,583.4 124.0,584.6 C125.3,585.9 126.6,581.8 128.0,581.9 C129.4,582.0 131.1,584.3 132.4,585.3 C133.7,586.3 134.8,589.8 135.8,588.0 C136.8,586.2 137.4,577.6 138.5,574.4 C139.6,571.2 141.3,567.9 142.6,569.0 C143.8,570.1 144.9,580.6 146.0,581.2 C147.1,581.8 148.0,574.0 149.4,572.4 C150.8,570.8 152.9,573.9 154.2,571.7 C155.5,569.6 156.3,560.4 157.3,559.5 C158.3,558.6 159.1,559.5 160.3,566.3 C161.5,573.1 163.1,603.0 164.4,600.3 C165.7,597.6 166.8,554.2 168.0,549.9 C169.2,545.6 170.6,564.6 171.9,574.4 C173.2,584.1 174.9,602.4 176.0,608.4 C177.1,614.4 177.5,610.0 178.5,610.3 C179.5,610.6 181.0,610.4 182.0,610.3 C183.0,610.2 183.6,610.8 184.3,609.8 C185.0,608.8 185.1,605.3 186.1,604.4 C187.1,603.5 188.9,605.5 190.2,604.1 C191.4,602.7 192.3,602.7 193.6,596.2 C194.8,589.7 195.6,572.1 197.7,564.9 C199.8,557.6 204.1,555.2 205.9,552.7 C207.7,550.2 207.7,552.0 208.6,549.9 C209.5,547.8 210.2,543.0 211.3,540.4 C212.4,537.8 214.4,534.8 215.4,534.3 C216.4,533.8 216.5,527.8 217.4,537.7 C218.3,547.6 219.9,583.5 220.8,593.5 C221.7,603.5 222.0,598.5 222.9,597.6 C223.8,596.7 224.8,588.6 226.3,588.0 C227.8,587.4 230.1,592.0 231.7,594.1 C233.3,596.2 234.4,599.5 236.0,600.6 C237.6,601.7 239.3,600.5 241.0,600.5 C242.7,600.5 244.6,600.5 246.0,600.5 C247.4,600.5 247.9,602.5 249.2,600.2 C250.5,597.9 252.5,589.0 253.6,586.5 C254.7,584.0 254.5,585.6 255.5,585.4 C256.5,585.2 258.6,585.1 259.5,585.4 C260.4,585.7 260.4,583.4 261.0,587.0 C261.6,590.6 262.0,601.9 263.0,606.8 C264.0,611.7 265.6,615.9 266.9,616.5 C268.1,617.1 269.2,610.4 270.5,610.4 C271.8,610.4 272.6,618.1 274.4,616.5 C276.2,614.9 279.4,601.9 281.1,600.8 C282.8,599.6 283.7,608.1 284.7,609.6 C285.7,611.1 286.2,609.8 287.0,609.8 C287.8,609.8 288.7,612.6 289.6,609.6 C290.5,606.6 291.2,588.1 292.3,591.8 C293.4,595.5 294.9,623.9 296.1,631.8 C297.3,639.7 298.2,638.5 299.4,639.1 C300.6,639.7 301.9,635.9 303.4,635.4 C304.9,634.9 306.5,633.8 308.3,635.9 C310.1,638.0 312.6,649.9 314.0,648.1 C315.4,646.3 315.8,642.8 316.5,625.3 C317.2,607.8 317.5,564.0 318.3,543.1 C319.1,522.2 320.4,500.9 321.5,499.7 C322.6,498.5 323.9,527.9 325.0,536.0 C326.1,544.1 326.8,537.6 328.0,548.4 C329.2,559.2 331.1,600.8 332.4,600.6 C333.7,600.4 334.8,551.9 336.0,547.0 C337.2,542.1 338.3,565.2 339.5,571.4 C340.7,577.6 342.2,586.2 343.4,584.3 C344.6,582.4 345.4,558.1 346.8,560.1 C348.2,562.1 350.2,590.0 351.6,596.2 C353.0,602.5 353.3,597.4 355.0,597.6 C356.7,597.8 359.5,599.4 361.8,597.6 C364.1,595.8 366.8,589.8 368.6,586.7 C370.4,583.6 370.8,578.3 372.4,578.8 C374.0,579.2 375.9,585.8 378.1,589.4 C380.3,593.0 383.5,598.4 385.6,600.3 C387.8,602.2 389.5,600.4 391.0,601.0 C392.5,601.6 393.1,603.1 394.4,603.7 C395.6,604.3 396.9,603.5 398.5,604.4 C400.1,605.3 402.2,608.1 403.9,609.1 C405.6,610.1 407.3,610.8 408.7,610.5 C410.1,610.2 410.9,609.2 412.1,607.1 C413.3,605.0 414.5,598.2 415.9,597.6 C417.3,597.0 419.1,607.9 420.3,603.7 C421.5,599.5 421.6,575.0 423.3,572.4 C425.0,569.8 428.6,586.0 430.5,588.0 C432.4,590.0 433.4,584.6 434.6,584.6 C435.9,584.6 436.6,587.4 438.0,588.0 C439.4,588.6 441.3,586.0 442.7,588.0 C444.1,590.0 445.0,597.7 446.1,600.3 C447.2,602.9 448.6,605.2 449.5,603.7 C450.4,602.2 450.7,593.0 451.8,591.4 C452.9,589.8 454.9,594.2 456.3,594.1 C457.7,594.0 458.4,590.4 460.2,591.0 C462.0,591.6 465.4,597.0 467.2,597.6 C469.0,598.2 469.5,593.8 471.1,594.6 C472.7,595.5 475.0,601.1 476.8,602.7 C478.6,604.3 479.9,604.4 481.9,604.1 C483.9,603.8 487.0,601.5 489.0,601.0 C491.0,600.5 492.6,600.9 493.8,601.4 C495.1,601.9 495.4,603.7 496.5,603.7 C497.6,603.7 499.0,599.4 500.6,601.4 C502.2,603.4 503.6,613.4 506.0,615.9 C508.4,618.4 512.9,617.7 514.9,616.6 C516.9,615.5 517.1,610.8 518.3,609.1 C519.5,607.4 521.1,608.3 522.3,606.4 C523.5,604.5 523.9,598.2 525.7,597.8 C527.5,597.3 531.4,603.7 533.2,603.7 C535.0,603.7 535.5,597.8 536.6,597.8 C537.7,597.8 538.8,607.4 540.0,603.7 C541.2,600.0 542.6,577.3 544.1,575.8 C545.6,574.3 547.1,589.1 548.9,594.8 C550.7,600.5 553.4,607.0 555.0,610.1 C556.6,613.2 557.0,612.6 558.4,613.2 C559.8,613.8 561.3,611.1 563.2,613.9 C565.1,616.7 567.9,627.1 570.0,630.0 C572.1,632.9 573.9,630.4 575.7,631.4 C577.5,632.4 578.7,636.6 580.6,635.7 C582.5,634.9 585.2,627.5 587.1,626.3 C589.0,625.1 590.1,629.2 592.0,628.6 C593.9,628.0 596.3,623.4 598.6,622.9 C600.9,622.4 603.5,625.3 605.7,625.7 C607.9,626.1 610.1,626.1 612.0,625.1 C613.9,624.1 615.7,624.2 617.1,620.0 C618.5,615.8 619.4,615.7 620.6,600.0 C621.8,584.3 623.1,548.4 624.3,525.7 C625.5,503.0 626.8,464.6 627.8,464.0 C628.8,463.4 629.5,510.9 630.5,522.4 C631.5,533.9 632.6,530.3 633.8,533.0 C635.0,535.7 636.4,536.2 637.9,538.8 C639.4,541.3 640.9,544.7 642.5,548.3 C644.1,551.9 645.8,557.9 647.4,560.5 C649.0,563.1 650.6,562.2 652.0,564.0 C653.4,565.8 654.5,568.7 656.0,571.0 C657.5,573.3 660.0,576.8 660.8,578.0" fill="none" stroke="#3ec7bf" stroke-width="1.6"/>
<circle cx="116.5" cy="569.0" r="2.3" fill="#3ec7bf" stroke="#fff" stroke-width="0.7"/>
<circle cx="116.5" cy="678.5" r="2.3" fill="#f7981c" stroke="#fff" stroke-width="0.7"/>
<circle cx="116.5" cy="702.4" r="2.3" fill="#646977" stroke="#fff" stroke-width="0.7"/>
<circle cx="189.6" cy="604.1" r="2.3" fill="#3ec7bf" stroke="#fff" stroke-width="0.7"/>
<circle cx="189.6" cy="692.2" r="2.3" fill="#f7981c" stroke="#fff" stroke-width="0.7"/>
<circle cx="189.6" cy="702.4" r="2.3" fill="#646977" stroke="#fff" stroke-width="0.7"/>
<circle cx="262.7" cy="606.8" r="2.3" fill="#3ec7bf" stroke="#fff" stroke-width="0.7"/>
<circle cx="262.7" cy="680.0" r="2.3" fill="#f7981c" stroke="#fff" stroke-width="0.7"/>
<circle cx="262.7" cy="702.4" r="2.3" fill="#646977" stroke="#fff" stroke-width="0.7"/>
<circle cx="335.8" cy="547.0" r="2.3" fill="#3ec7bf" stroke="#fff" stroke-width="0.7"/>
<circle cx="335.8" cy="607.0" r="2.3" fill="#f7981c" stroke="#fff" stroke-width="0.7"/>
<circle cx="335.8" cy="705.2" r="2.3" fill="#646977" stroke="#fff" stroke-width="0.7"/>
<circle cx="408.9" cy="610.5" r="2.3" fill="#3ec7bf" stroke="#fff" stroke-width="0.7"/>
<circle cx="408.9" cy="684.1" r="2.3" fill="#f7981c" stroke="#fff" stroke-width="0.7"/>
<circle cx="408.9" cy="705.2" r="2.3" fill="#646977" stroke="#fff" stroke-width="0.7"/>
<circle cx="482.0" cy="604.1" r="2.3" fill="#3ec7bf" stroke="#fff" stroke-width="0.7"/>
<circle cx="482.0" cy="672.5" r="2.3" fill="#f7981c" stroke="#fff" stroke-width="0.7"/>
<circle cx="482.0" cy="702.4" r="2.3" fill="#646977" stroke="#fff" stroke-width="0.7"/>
<circle cx="555.1" cy="610.1" r="2.3" fill="#3ec7bf" stroke="#fff" stroke-width="0.7"/>
<circle cx="555.1" cy="669.8" r="2.3" fill="#f7981c" stroke="#fff" stroke-width="0.7"/>
<circle cx="555.1" cy="705.2" r="2.3" fill="#646977" stroke="#fff" stroke-width="0.7"/>
<circle cx="628.2" cy="464.0" r="2.3" fill="#3ec7bf" stroke="#fff" stroke-width="0.7"/>
<circle cx="628.2" cy="411.6" r="2.3" fill="#f7981c" stroke="#fff" stroke-width="0.7"/>
<circle cx="628.2" cy="705.2" r="2.3" fill="#646977" stroke="#fff" stroke-width="0.7"/>
<line x1="68.2" y1="391.5" x2="68.2" y2="708.8" stroke="#6e7ea3" stroke-width="1"/>
<line x1="115.5" y1="391.5" x2="115.5" y2="708.8" stroke="#3d8ff0" stroke-width="1"/>
<line x1="663" y1="391.5" x2="663" y2="708.8" stroke="#f7b562" stroke-width="1.2"/>
<line x1="710.6" y1="391.5" x2="710.6" y2="708.8" stroke="#5dcfc8" stroke-width="1"/>
<line x1="115.5" y1="708.8" x2="663" y2="708.8" stroke="#7b7f8c" stroke-width="1"/>
<line x1="115.8" y1="708.8" x2="115.8" y2="712.8" stroke="#7b7f8c" stroke-width="1"/>
<line x1="188.8" y1="708.8" x2="188.8" y2="712.8" stroke="#7b7f8c" stroke-width="1"/>
<line x1="261.8" y1="708.8" x2="261.8" y2="712.8" stroke="#7b7f8c" stroke-width="1"/>
<line x1="334.8" y1="708.8" x2="334.8" y2="712.8" stroke="#7b7f8c" stroke-width="1"/>
<line x1="407.8" y1="708.8" x2="407.8" y2="712.8" stroke="#7b7f8c" stroke-width="1"/>
<line x1="480.8" y1="708.8" x2="480.8" y2="712.8" stroke="#7b7f8c" stroke-width="1"/>
<line x1="553.8" y1="708.8" x2="553.8" y2="712.8" stroke="#7b7f8c" stroke-width="1"/>
<line x1="626.8" y1="708.8" x2="626.8" y2="712.8" stroke="#7b7f8c" stroke-width="1"/>
<line x1="663" y1="708.8" x2="663" y2="712.8" stroke="#7b7f8c" stroke-width="1"/>
</svg>
<div class="yl" style="top:384.5px">1,200,000</div>
<div class="yl" style="top:437.4px">1,000,000</div>
<div class="yl" style="top:490.3px">800,000</div>
<div class="yl" style="top:543.1px">600,000</div>
<div class="yl" style="top:596.0px">400,000</div>
<div class="yl" style="top:648.9px">200,000</div>
<div class="yl" style="top:701.8px">0</div>
<div class="yl2" style="top:384.5px">$1</div>
<div class="yl2" style="top:701.8px">$0</div>
<div class="yr" style="top:384.5px">800,000</div>
<div class="yr" style="top:424.2px">700,000</div>
<div class="yr" style="top:463.8px">600,000</div>
<div class="yr" style="top:503.5px">500,000</div>
<div class="yr" style="top:543.1px">400,000</div>
<div class="yr" style="top:582.8px">300,000</div>
<div class="yr" style="top:622.5px">200,000</div>
<div class="yr" style="top:662.1px">100,000</div>
<div class="yr" style="top:701.8px">0</div>
<div class="yt" style="top:384.5px">100%</div>
<div class="yt" style="top:701.8px">0%</div>
<div class="xl" style="left:75.8px">Feb 01, 2023</div>
<div class="xl" style="left:148.8px">Feb 21, 2023</div>
<div class="xl" style="left:221.8px">Mar 13, 2023</div>
<div class="xl" style="left:294.8px">Apr 02, 2023</div>
<div class="xl" style="left:367.8px">Apr 22, 2023</div>
<div class="xl" style="left:440.8px">May 12, 2023</div>
<div class="xl" style="left:513.8px">Jun 01, 2023</div>
<div class="xl" style="left:586.8px">Jun 21, 2023</div>

<!-- dark blob at left edge -->
<div class="abs" style="left:-2.5px;top:704.5px;width:4px;height:7px;border-radius:50%;background:#1d2433"></div>

<!-- right card -->
<div class="card" style="left:783px;top:165px;width:355.4px;height:509.5px"></div>
<div class="abs" style="left:783px;top:199.2px;width:355.4px;height:1px;background:#e8eaf0"></div>
<div class="abs" style="left:960px;top:165px;width:1px;height:509.5px;background:#e8eaf0"></div>
<div class="t" style="left:791.6px;top:175.6px;font-size:13.55px;font-weight:bold;color:#1d2129">Scorecard</div>
<div class="t" style="left:970.2px;top:176px;font-size:13.3px;font-weight:bold;color:#1d2129">Data</div>
<div class="abs" style="left:789px;top:206.7px;width:164.8px;height:22.8px;border-radius:3px;background:#f0f3fb"></div>
<div class="t" style="left:794.9px;top:214px;font-size:10.24px;color:#2b2f38">Metrics</div>
<div class="t" style="left:933.6px;top:214px;font-size:10.2px;color:#2b2f38">5/6</div>
<div class="abs" style="left:967px;top:206.7px;width:165.7px;height:22.8px;border-radius:3px;background:#f0f3fb"></div>
<div class="t" style="left:972.7px;top:214px;font-size:10.24px;color:#2b2f38">Metrics</div>
<svg class="abs" style="left:788px;top:235.5px" width="166" height="121" viewBox="0 0 166 121"><rect x="0.6" y="0.6" width="165" height="119.6" rx="3" fill="none" stroke="#bcc7e3" stroke-width="1" stroke-dasharray="2.5 2"/></svg>
<div class="sc-row" style="top:240.9px">Impression Users</div>
<svg class="trash" style="top:243.9px" width="10" height="10" viewBox="0 0 9 9.5"><path d="M0.5,1.8 H8.5 M3,1.8 V0.6 H6 V1.8 M1.6,1.8 L2,9 H7 L7.4,1.8 M3.6,3.6 V7.2 M5.4,3.6 V7.2" fill="none" stroke="#4a68c4" stroke-width="0.9"/></svg>
<div class="sc-row" style="top:264.6px">New-to-brand Impression Us...</div>
<svg class="trash" style="top:267.6px" width="10" height="10" viewBox="0 0 9 9.5"><path d="M0.5,1.8 H8.5 M3,1.8 V0.6 H6 V1.8 M1.6,1.8 L2,9 H7 L7.4,1.8 M3.6,3.6 V7.2 M5.4,3.6 V7.2" fill="none" stroke="#4a68c4" stroke-width="0.9"/></svg>
<div class="sc-row" style="top:288.4px">Impression Users New-to-br...</div>
<svg class="trash" style="top:291.4px" width="10" height="10" viewBox="0 0 9 9.5"><path d="M0.5,1.8 H8.5 M3,1.8 V0.6 H6 V1.8 M1.6,1.8 L2,9 H7 L7.4,1.8 M3.6,3.6 V7.2 M5.4,3.6 V7.2" fill="none" stroke="#4a68c4" stroke-width="0.9"/></svg>
<div class="sc-row" style="top:312.1px">Cost per Impression User</div>
<svg class="trash" style="top:315.1px" width="10" height="10" viewBox="0 0 9 9.5"><path d="M0.5,1.8 H8.5 M3,1.8 V0.6 H6 V1.8 M1.6,1.8 L2,9 H7 L7.4,1.8 M3.6,3.6 V7.2 M5.4,3.6 V7.2" fill="none" stroke="#4a68c4" stroke-width="0.9"/></svg>
<div class="sc-row" style="top:335.9px">Cost per New-to-brand Click ...</div>
<svg class="trash" style="top:338.9px" width="10" height="10" viewBox="0 0 9 9.5"><path d="M0.5,1.8 H8.5 M3,1.8 V0.6 H6 V1.8 M1.6,1.8 L2,9 H7 L7.4,1.8 M3.6,3.6 V7.2 M5.4,3.6 V7.2" fill="none" stroke="#4a68c4" stroke-width="0.9"/></svg>
<div class="dt-row" style="top:240.4px">Click-throughs</div>
<div class="dt-row" style="top:264.1px">eCPC</div>
<div class="dt-row" style="top:287.8px">Click Users New-to-brand Rate</div>
<div class="dt-row" style="top:311.4px">Click Users</div>
<div class="dt-row" style="top:335.1px">New-to-brand Click Users</div>
<div class="dt-row" style="top:358.8px">Cost per Click User</div>
<div class="dt-row dis" style="top:382.5px">Cost per Impression User</div>
<div class="dt-row" style="top:406.2px">Cost per New-to-brand Impre...</div>
<div class="dt-row dis" style="top:429.8px">Cost per New-to-brand Click ...</div>
<div class="dt-row" style="top:453.5px">Frequency</div>
<div class="dt-row" style="top:477.2px">Impressions</div>
<div class="dt-row dis" style="top:500.9px">Impression Users New-to-bra...</div>
<div class="dt-row dis" style="top:524.6px">Impression Users</div>
<div class="dt-row dis" style="top:548.2px">New-to-brand Impression Us...</div>
<div class="dt-row" style="top:571.9px">Cost of New-to-brand Click U...</div>
<div class="dt-row" style="top:595.6px">Cost of New-to-brand Impres...</div>
<div class="dt-row" style="top:619.3px">eCPM</div>
<div class="dt-row" style="top:643.0px">Total Cost</div>

<!-- bottom card -->
<div class="card" style="left:783px;top:683.6px;width:355.2px;height:41.6px"></div>
<div class="btn" style="left:893px;top:692.7px;width:70.4px;height:23.7px;border:1px solid #4a68c4;background:#fff"></div>
<svg class="abs" style="left:904px;top:700px" width="10" height="8" viewBox="0 0 10 8"><path d="M0.6,4 Q5,-0.5 9.4,4 Q5,8.5 0.6,4 Z" fill="none" stroke="#4a68c4" stroke-width="0.9"/><circle cx="5" cy="4" r="1.4" fill="none" stroke="#4a68c4" stroke-width="0.9"/></svg>
<div class="t" style="left:917.5px;top:699.5px;font-size:9.6px;color:#3a59bb">Preview</div>
<div class="btn" style="left:970.6px;top:692.4px;width:57.2px;height:23.8px;background:#3355b5"></div>
<svg class="abs" style="left:982.5px;top:699.5px" width="9" height="9" viewBox="0 0 9 9"><rect x="0.5" y="0.5" width="8" height="8" rx="1" fill="none" stroke="#fff" stroke-width="0.9"/><path d="M2.3,0.8 V3.3 H6.7 V0.8" fill="none" stroke="#fff" stroke-width="0.9"/></svg>
<div class="t" style="left:996px;top:699.5px;font-size:9.6px;color:#fff">Save</div>
</body></html>
